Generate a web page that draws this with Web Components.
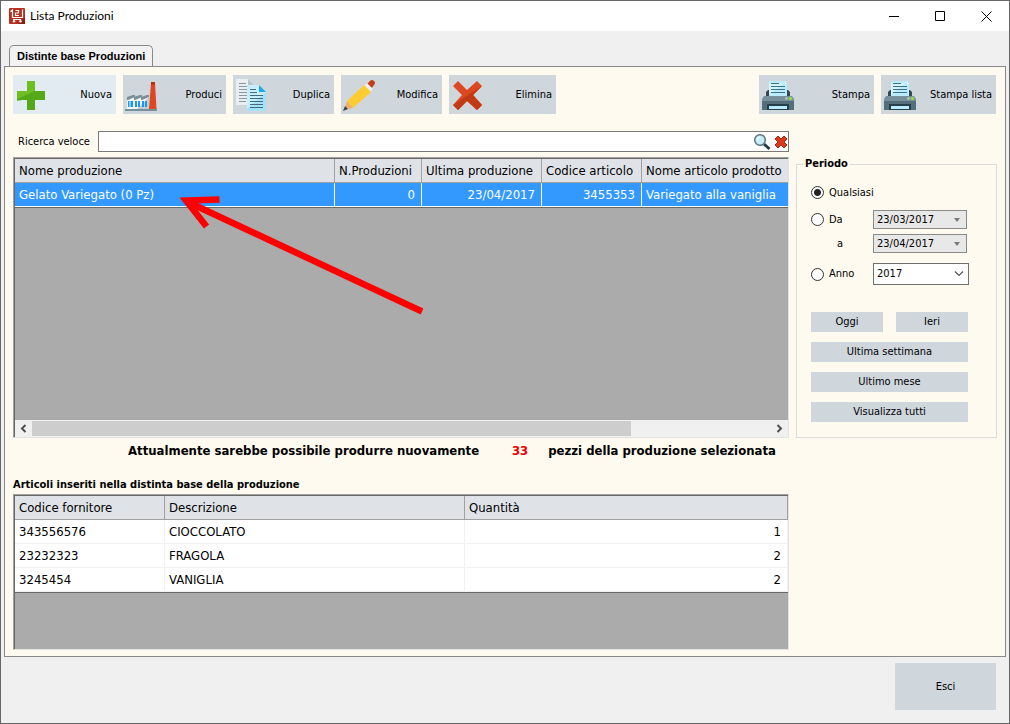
<!DOCTYPE html>
<html lang="it">
<head>
<meta charset="utf-8">
<meta name="viewport" content="width=device-width, initial-scale=1">
<title>Lista Produzioni</title>
<style>
  html, body { margin: 0; }
  body {
    --ui: "DejaVu Sans Condensed", "DejaVu Sans", sans-serif;
    --button: #cfd7dd;
    --cream: #fefaef;
    font: 11px/14px var(--ui);
    color: #000;
    background: #f0f0f0;
  }
</style>
</head>
<body>
<app-window></app-window>

<script>
const icons = {
  app: `<svg width="16" height="16" viewBox="0 0 16 16"><rect width="16" height="16" rx="1" fill="#b5301f"/><path d="M9 16L16 9v7z" fill="#8b2015"/><path d="M1.500 3.500l2-1.500v7.500h10V1.500M6.500 2.500h3v2.500h-3v2.500h3.500M4 11.500h8" fill="none" stroke="#fff" stroke-width="1.200"/><circle cx="5" cy="13.300" r="1.200" fill="#fff"/><circle cx="11.500" cy="13.300" r="1.200" fill="#fff"/></svg>`,
  plus: `<svg width="32" height="32" viewBox="0 0 32 32"><path d="M12 2h8v10h10v5L2 22V12h10z" fill="#6cbf20"/><path d="M20 12h10v9H20v10h-8V21H2v-1z" fill="#54a91a"/></svg>`,
  factory: `<svg width="32" height="32" viewBox="0 0 32 32"><path d="M26 4h4l1.500 26H24z" fill="#dd4620"/><path d="M26 3h4v3h-4z" fill="#b93112"/><path d="M2 20l7-3v3l7-3v3l8-3v13H2z" fill="#f1f5f7"/><path d="M12 30l12-12v12z" fill="#c3cdd2"/><path d="M2 18l6-2h2v2l-7 3H2zM9 18l6-2h2v2l-7 3H9zM16 18l6-2h2v2l-7 3h-1z" fill="#7b8d97"/><path d="M3 22h1.500v6H3zM5.500 22H8v6H5.500zM10 22h2v6h-2zM13 22h2v6h-2zM17 22h2v6h-2zM20 22h2v6h-2z" fill="#1e96f0"/><path d="M0 30h32v2H0z" fill="#78909c"/></svg>`,
  copy: `<svg width="32" height="32" viewBox="0 0 32 32"><path d="M1 0h12l6 6v20H1z" fill="#e9eef0"/><path d="M13 0l6 6h-6z" fill="#b8c3c9"/><path d="M4 4.500h7M4 7.500h9M4 10.500h9M4 13.500h9M4 16.500h9M4 19.500h9M4 22.500h7" stroke="#8a979e"/><path d="M12 6h12l7 7v19H12z" fill="#c5effd"/><path d="M12 30L31 13v19H12z" fill="#a3e2fa"/><path d="M24 6l7 7h-7z" fill="#1da5f0"/><path d="M15 10.500h6M15 13.500h7M15 16.500h13M15 19.500h13M15 22.500h13M15 25.500h13M15 28.500h13" stroke="#44697b"/></svg>`,
  pencil: `<svg width="32" height="32" viewBox="0 0 32 32"><path d="M24 5l3-3q2-2 4 0 2 2 0 4l-3 4z" fill="#c83a18"/><path d="M21 7l3-3 6 6-3 3z" fill="#eceff1"/><path d="M4 22L21 6l7 7L10 29z" fill="#fdcc30"/><path d="M4 22l6 7-9 2z" fill="#f0af6b"/><path d="M2 27l3 3-5 2z" fill="#37474f"/></svg>`,
  cross: `<svg width="32" height="32" viewBox="0 0 32 32"><path d="M2 7l5-5 9 9 10-9 5 5-9 9 9 10-5 5-10-9-9 9-5-5 9-10z" fill="#dd4821"/><path d="M31 7l-9 9 9 10-5 5-10-9-9 9-5-5z" fill="#c23916"/></svg>`,
  printer: `<svg width="34" height="32" viewBox="0 0 34 32"><path d="M5 13l2-2h20l2 2v6H5z" fill="#37474f"/><path d="M8 2h16l2 3v13H8z" fill="#b9ecfc"/><path d="M24 2l2 3h-2z" fill="#eafaff"/><path d="M8 16L23 4H8z" fill="#d5f5fe"/><path d="M10 4.500h8M10 7.500h14M10 10.500h14M10 13.500h14" stroke="#3b728a"/><path d="M3 17h28l2 3v4H1v-4z" fill="#78909c"/><path d="M1 22h32v9H1z" fill="#546e7a"/><path d="M6 25h22v6H6z" fill="#263e48"/><path d="M8 27h18v3H8z" fill="#b9ecfc"/><circle cx="29.500" cy="19.500" r="1.800" fill="#8bdc3e"/><circle cx="25.500" cy="19.500" r="1.300" fill="#b8c7ce"/></svg>`,
  search: `<svg width="18" height="18" viewBox="0 0 18 18"><path d="M11 11l5.500 5" stroke="#263b47" stroke-width="3"/><circle cx="7" cy="7" r="5.300" fill="#c9edf8" stroke="#5d7280" stroke-width="1.500"/><path d="M4 7a3 3 0 0 1 3-3" stroke="#fff" fill="none"/></svg>`,
  clear: `<svg width="14" height="14" viewBox="0 0 14 14"><path d="M1 4l3-3 3 3 3-3 3 3-3 3 3 3-3 3-3-3-3 3-3-3 3-3z" fill="#d93a1c" stroke="#a02a12"/></svg>`,
  minimize: `<svg width="11" height="11" viewBox="0 0 11 11"><path d="M0 5.500h10" stroke="#000"/></svg>`,
  maximize: `<svg width="11" height="11" viewBox="0 0 11 11"><path d="M.5.500h9v9h-9z" fill="none" stroke="#000"/></svg>`,
  close: `<svg width="11" height="11" viewBox="0 0 11 11"><path d="M.5.500l10 10M10.500.500l-10 10" stroke="#000"/></svg>`,
  left: `<svg width="7" height="9" viewBox="0 0 7 9"><path d="M5.500 1L2 4.500 5.500 8" fill="none" stroke="#505050" stroke-width="2"/></svg>`,
  right: `<svg width="7" height="9" viewBox="0 0 7 9"><path d="M1.500 1L5 4.500 1.500 8" fill="none" stroke="#505050" stroke-width="2"/></svg>`,
  triangle: `<svg width="6" height="4" viewBox="0 0 6 4"><path d="M0 0h6L3 4z" fill="#7a7a7a"/></svg>`,
  chevron: `<svg width="10" height="6" viewBox="0 0 10 6"><path d="M1 .5l4 4 4-4" fill="none" stroke="#555" stroke-width="1.200"/></svg>`
};

const gridData = {
  productions: {
    columns: [
      { title: 'Nome produzione', width: 320 },
      { title: 'N.Produzioni', width: 87, num: true },
      { title: 'Ultima produzione', width: 120, num: true },
      { title: 'Codice articolo', width: 100, num: true },
      { title: 'Nome articolo prodotto' }
    ],
    rows: [{ selected: true, cells: ['Gelato Variegato (0 Pz)', '0', '23/04/2017', '3455353', 'Variegato alla vaniglia'] }]
  },
  articles: {
    columns: [
      { title: 'Codice fornitore', width: 150 },
      { title: 'Descrizione', width: 300 },
      { title: 'Quantità', num: true }
    ],
    rows: [
      { cells: ['343556576', 'CIOCCOLATO', '1'] },
      { cells: ['23232323', 'FRAGOLA', '2'] },
      { cells: ['3245454', 'VANIGLIA', '2'] }
    ]
  }
};

customElements.define('ui-icon', class extends HTMLElement {
  static observedAttributes = ['name'];
  constructor() {
    super();
    this.attachShadow({ mode: 'open' });
  }
  attributeChangedCallback() {
    this.shadowRoot.innerHTML = `<style>:host{display:block;flex:none}svg{display:block}</style>${icons[this.getAttribute('name')]}`;
  }
});

const define = (name, markup, ready) => {
  const template = document.createElement('template');
  template.innerHTML = markup;
  customElements.define(name, class extends HTMLElement {
    constructor() {
      super();
      this.attachShadow({ mode: 'open' }).append(template.content.cloneNode(true));
    }
    connectedCallback() { if (ready) ready(this, this.shadowRoot); }
  });
};

define('title-bar', `
<style>
  :host { display: flex; align-items: center; height: 30px; background: #fff; padding-left: 8px; gap: 5px; }
  h1 { flex: 1; margin: 0; font: 12px/16px Lato, sans-serif; }
  nav { display: flex; align-self: stretch; }
  button { width: 46px; padding: 0; border: 0; background: none; display: grid; place-items: center; }
</style>
<ui-icon name="app"></ui-icon>
<h1><slot></slot></h1>
<nav>
  <button aria-label="Riduci a icona"><ui-icon name="minimize"></ui-icon></button>
  <button aria-label="Ingrandisci"><ui-icon name="maximize"></ui-icon></button>
  <button aria-label="Chiudi"><ui-icon name="close"></ui-icon></button>
</nav>`);

define('tool-button', `
<style>
  :host { display: block; width: 103px; }
  :host([size="small"]) { width: 101px; }
  :host([size="medium"]) { width: 107px; }
  :host([size="large"]) { width: 115px; }
  button { display: flex; align-items: center; justify-content: space-between; width: 100%; height: 39px;
    padding: 0 4px 0 2px; border: 0; background: var(--button); color: inherit; font: inherit; }
  :host([active]) button { background: #e2ebf1; }
</style>
<button><ui-icon></ui-icon><span><slot></slot></span></button>`, (host, root) => {
  root.querySelector('ui-icon').setAttribute('name', host.getAttribute('icon'));
});

define('flat-button', `
<style>
  :host { display: block; height: 20px; }
  button { display: block; width: 100%; height: 100%; padding: 0; border: 0; background: var(--button); color: inherit; font: inherit; }
</style>
<button><slot></slot></button>`);

define('tool-bar', `
<style>
  :host { display: flex; gap: 7px; padding-right: 1px; }
  .gap { flex: 1; }
</style>
<tool-button icon="plus" active>Nuova</tool-button>
<tool-button icon="factory">Produci</tool-button>
<tool-button icon="copy" size="small">Duplica</tool-button>
<tool-button icon="pencil" size="small">Modifica</tool-button>
<tool-button icon="cross" size="medium">Elimina</tool-button>
<span class="gap"></span>
<tool-button icon="printer" size="large">Stampa</tool-button>
<tool-button icon="printer" size="large">Stampa lista</tool-button>`);

define('quick-search', `
<style>
  :host { display: flex; align-items: center; padding-left: 5px; }
  label { width: 80px; }
  .box { flex: 1; display: flex; align-items: center; height: 19px; border: 1px solid #7a7a7a; background: #fff; }
  input { flex: 1; min-width: 0; border: 0; outline: 0; padding: 0 4px; background: none; font: inherit; }
  button { border: 0; padding: 0 0 0 3px; background: none; }
</style>
<label for="q">Ricerca veloce</label>
<div class="box">
  <input id="q" type="text">
  <button aria-label="Cerca"><ui-icon name="search"></ui-icon></button>
  <button aria-label="Cancella"><ui-icon name="clear"></ui-icon></button>
</div>`);

define('data-grid', `
<style>
  :host { display: flex; flex-direction: column; box-sizing: border-box; background: #ababab;
    border: 1px solid; border-color: #a0a0a0 #e3e3e3 #e3e3e3 #a0a0a0; }
  .view { flex: 1; border: solid #696969; border-width: 1px 0 0 1px; }
  table { width: 100%; table-layout: fixed; border-collapse: separate; border-spacing: 0;
    font-size: 13px; line-height: 16px; background: #fff; border-bottom: 1px solid #696969; }
  th, td { box-sizing: border-box; height: 24px; padding: 0 4px; text-align: left; font-weight: normal;
    white-space: nowrap; overflow: hidden; border: solid #f0f0f0; border-width: 0 1px 1px 0; }
  th { background: #dfe3e8; border-color: #a0a0a0; }
  td.num { text-align: right; padding-right: 6px; }
  tr.selected td { background: #3399ff; color: #fff; border-color: #fff; }
  :host([scroll]) th:last-child, :host([scroll]) td:last-child { border-right: 0; }
</style>
<div class="view"><table><colgroup></colgroup><thead><tr></tr></thead><tbody></tbody></table></div>
<slot></slot>`, (host, root) => {
  const { columns, rows } = gridData[host.getAttribute('source')];
  root.querySelector('colgroup').innerHTML = columns.map(c => c.width ? `<col style="width:${c.width}px">` : '<col>').join('');
  root.querySelector('thead tr').innerHTML = columns.map(c => `<th scope="col">${c.title}</th>`).join('');
  root.querySelector('tbody').innerHTML = rows.map(r =>
    `<tr${r.selected ? ' class="selected"' : ''}>` + r.cells.map((v, i) => `<td${columns[i].num ? ' class="num"' : ''}>${v}</td>`).join('') + '</tr>').join('');
});

define('scroll-strip', `
<style>
  :host { display: flex; height: 17px; background: #f0f0f0; border-left: 1px solid #696969; }
  button { width: 17px; padding: 0; border: 0; background: none; display: grid; place-items: center; }
  .track { flex: 1; display: flex; padding: 1px 0; }
  .thumb { width: 81%; background: #cdcdcd; }
</style>
<button aria-label="Scorri a sinistra"><ui-icon name="left"></ui-icon></button>
<div class="track"><div class="thumb"></div></div>
<button aria-label="Scorri a destra"><ui-icon name="right"></ui-icon></button>`);

define('pointer-arrow', `
<style>
  :host { position: absolute; left: 165px; top: 36px; pointer-events: none; }
  svg { display: block; }
</style>
<svg width="250" height="126" viewBox="178 193 250 126" fill="none" stroke="#f00" stroke-width="6.500">
  <path d="M190 203L422 311.500"/><path d="M219.500 199.500L186 200.500L206.500 226.500"/>
</svg>`);

define('drop-box', `
<style>
  :host { display: grid; grid-template-columns: 1fr 18px; align-items: center; box-sizing: border-box; height: 22px;
    border: 1px solid #707070; background: #fff; font-size: 11px; }
  :host([disabled]) { height: 19px; width: 94px; border-color: #8a8a8a; background: #e8e8e8; }
  ::slotted(select) { grid-area: 1 / 1 / 2 / 3; appearance: none; width: 100%; height: 100%; margin: 0; padding: 0 3px;
    border: 0; border-radius: 0; background: none; color: #000; opacity: 1; font: inherit; }
  .mark { grid-area: 1 / 2; justify-self: center; pointer-events: none; }
  .triangle, :host([disabled]) .chevron { display: none; }
  :host([disabled]) .triangle { display: block; }
</style>
<slot></slot>
<ui-icon class="mark chevron" name="chevron"></ui-icon>
<ui-icon class="mark triangle" name="triangle"></ui-icon>`);

define('period-panel', `
<style>
  :host { display: block; }
  fieldset { margin: 0; min-width: 0; height: 100%; box-sizing: border-box; border: 1px solid #dcdcdc; padding: 12px 27px 14px 14px; }
  legend { margin-left: -8px; padding: 0 2px; font-weight: bold; line-height: 14px; }
  .dates { display: grid; grid-template-columns: 62px 1fr; row-gap: 5px; align-items: center; }
  .wide { grid-column: 1 / 3; margin-bottom: 3px; }
  label { display: flex; align-items: center; gap: 5px; height: 19px; }
  .to { padding-left: 26px; }
  .year { margin-top: 5px; }
  input { appearance: none; box-sizing: border-box; width: 13px; height: 13px; margin: 0; border: 1px solid #333; border-radius: 50%; background: #fff; }
  input:checked { background: radial-gradient(circle, #222 0 3px, #fff 4px); }
  .buttons { display: grid; grid-template-columns: 1fr 1fr; gap: 10px 13px; margin-top: 27px; padding-right: 1px; }
  .full { grid-column: 1 / 3; }
</style>
<fieldset>
  <legend>Periodo</legend>
  <div class="dates">
    <label class="wide"><input type="radio" name="p" checked>Qualsiasi</label>
    <label><input type="radio" name="p">Da</label>
    <drop-box disabled><select disabled aria-label="Data iniziale"><option>23/03/2017</option></select></drop-box>
    <label class="to" for="to">a</label>
    <drop-box disabled><select id="to" disabled><option>23/04/2017</option></select></drop-box>
    <label class="year"><input type="radio" name="p">Anno</label>
    <drop-box class="year"><select aria-label="Anno"><option>2017</option></select></drop-box>
  </div>
  <div class="buttons">
    <flat-button>Oggi</flat-button>
    <flat-button>Ieri</flat-button>
    <flat-button class="full">Ultima settimana</flat-button>
    <flat-button class="full">Ultimo mese</flat-button>
    <flat-button class="full">Visualizza tutti</flat-button>
  </div>
</fieldset>`);

define('production-status', `
<style>
  :host { display: flex; padding-left: 115px; font-size: 13px; line-height: 16px; font-weight: bold; white-space: nowrap; }
  output { box-sizing: border-box; width: 69px; padding-right: 20px; text-align: right; color: #f00000; }
</style>
<span>Attualmente sarebbe possibile produrre nuovamente</span>
<output>33</output>
<span>pezzi della produzione selezionata</span>`);

define('tab-panel', `
<style>
  :host { display: flex; flex-direction: column; }
  .tab { align-self: flex-start; margin: 0 0 0 5px; padding: 0 7px; height: 21px; border: 1px solid #888; border-bottom: 0;
    border-radius: 5px 5px 0 0; background: #f2f2f2; font: bold 11px/20px "Liberation Sans", sans-serif; color: inherit; }
  .body { flex: 1; display: flex; flex-direction: column; border: 1px solid #888; background: var(--cream); padding: 8px 8px 6px; }
</style>
<button class="tab" role="tab" aria-selected="true"><slot name="label"></slot></button>
<div class="body"><slot></slot></div>`);

define('app-window', `
<style>
  :host { display: flex; flex-direction: column; box-sizing: border-box; min-height: 100vh; border: 1px solid #666; background: #f0f0f0; }
  tab-panel { flex: 1; margin: 14px 3px 0; }
  tool-bar { margin-bottom: 17px; }
  .main { flex: 1; display: grid; grid-template-columns: minmax(0, 1fr) 201px; grid-template-rows: auto minmax(281px, 1fr) auto auto minmax(156px, auto); column-gap: 7px; }
  .main > * { grid-column: 1; }
  quick-search { margin-bottom: 5px; }
  .top { position: relative; display: grid; }
  .main > period-panel { grid-column: 2; grid-row: 2; }
  production-status { margin: 5px 0 19px; }
  h2 { margin: 0 0 2px; font-size: 11px; line-height: 14px; font-weight: bold; }
  footer { display: flex; justify-content: flex-end; padding: 6px 13px 13px; }
  footer flat-button { width: 101px; height: 47px; }
</style>
<title-bar>Lista Produzioni</title-bar>
<tab-panel>
  <span slot="label">Distinte base Produzioni</span>
  <tool-bar></tool-bar>
  <div class="main">
    <quick-search></quick-search>
    <div class="top">
      <data-grid source="productions" scroll><scroll-strip></scroll-strip></data-grid>
      <pointer-arrow></pointer-arrow>
    </div>
    <period-panel></period-panel>
    <production-status></production-status>
    <h2>Articoli inseriti nella distinta base della produzione</h2>
    <data-grid source="articles"></data-grid>
  </div>
</tab-panel>
<footer><flat-button>Esci</flat-button></footer>`);
</script>
</body>
</html>
